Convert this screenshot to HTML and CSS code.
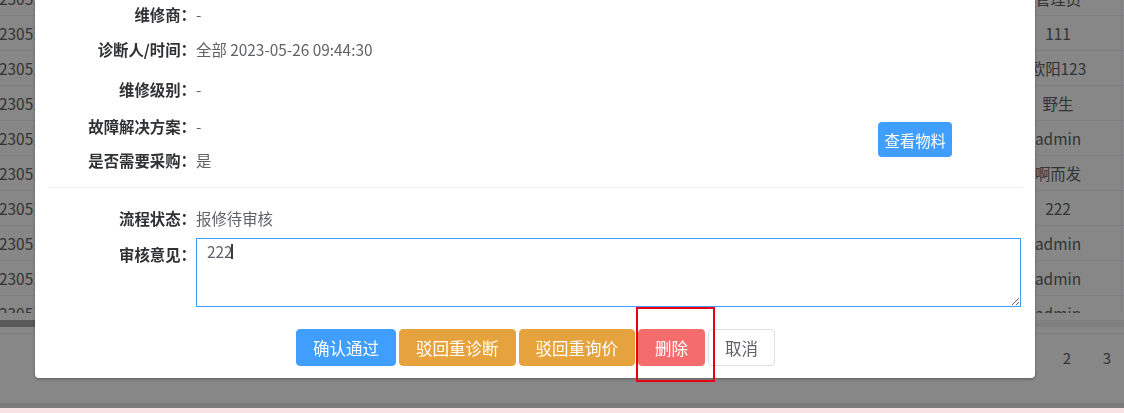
FILE: index.html
```html
<!DOCTYPE html>
<html lang="zh-CN">
<head>
<meta charset="utf-8">
<title>审核</title>
<link rel="stylesheet" href="styles.css">
</head>
<body>
<div class="page">
  <div class="table">
    <div class="tbody">
      <div class="rows">
        <div class="tr"><div class="td td-id">2305120001</div><div class="td td-fill"></div><div class="td td-name">管理员</div><div class="td td-end"></div></div>
        <div class="tr"><div class="td td-id">2305120002</div><div class="td td-fill"></div><div class="td td-name">111</div><div class="td td-end"></div></div>
        <div class="tr"><div class="td td-id">2305120003</div><div class="td td-fill"></div><div class="td td-name">欧阳123</div><div class="td td-end"></div></div>
        <div class="tr"><div class="td td-id">2305120004</div><div class="td td-fill"></div><div class="td td-name">野生</div><div class="td td-end"></div></div>
        <div class="tr"><div class="td td-id">2305120005</div><div class="td td-fill"></div><div class="td td-name">admin</div><div class="td td-end"></div></div>
        <div class="tr"><div class="td td-id">2305120006</div><div class="td td-fill"></div><div class="td td-name">啊而发</div><div class="td td-end"></div></div>
        <div class="tr"><div class="td td-id">2305120007</div><div class="td td-fill"></div><div class="td td-name">222</div><div class="td td-end"></div></div>
        <div class="tr"><div class="td td-id">2305120008</div><div class="td td-fill"></div><div class="td td-name">admin</div><div class="td td-end"></div></div>
        <div class="tr"><div class="td td-id">2305120009</div><div class="td td-fill"></div><div class="td td-name">admin</div><div class="td td-end"></div></div>
        <div class="tr"><div class="td td-id">2305120010</div><div class="td td-fill"></div><div class="td td-name">admin</div><div class="td td-end"></div></div>
      </div>
    </div>
    <div class="hscroll"><div class="hscroll-track"><div class="hscroll-thumb"></div></div></div>
  </div>
  <div class="pager"><span class="pager-item">2</span><span class="pager-item">3</span></div>
  <div class="page-bottom"></div>
</div>

<div class="overlay"></div>

<div class="dialog">
  <div class="info">
    <div class="info-list">
      <div class="field row-a"><span class="label">维修商：</span><span class="value">-</span></div>
      <div class="field row-b"><span class="label">诊断人/时间：</span><span class="value">全部 2023-05-26 09:44:30</span></div>
      <div class="field row-c"><span class="label">维修级别：</span><span class="value">-</span></div>
      <div class="field row-d"><span class="label">故障解决方案：</span><span class="value">-</span></div>
      <div class="field row-e"><span class="label">是否需要采购：</span><span class="value">是</span></div>
    </div>
    <div class="info-side">
      <button class="btn-view" type="button">查看物料</button>
    </div>
  </div>
  <div class="divider"></div>
  <div class="review">
    <div class="field row-status"><span class="label">流程状态：</span><span class="value">报修待审核</span></div>
    <div class="field row-opinion">
      <span class="label label-top">审核意见：</span>
      <div class="textarea-wrap">
        <textarea class="textarea">222</textarea>
        <span class="caret"></span>
      </div>
    </div>
  </div>
  <div class="actions">
    <button class="btn btn-primary" type="button">确认通过</button>
    <button class="btn btn-warning" type="button">驳回重诊断</button>
    <button class="btn btn-warning" type="button">驳回重询价</button>
    <button class="btn btn-danger" type="button">删除</button>
    <button class="btn btn-default" type="button">取消</button>
  </div>
</div>

<div class="annot"></div>
<div class="pink"></div>
</body>
</html>
```

FILE: styles.css
```css
* { box-sizing: border-box; }

html, body {
  margin: 0;
  padding: 0;
}

body {
  width: 1124px;
  height: 413px;
  overflow: hidden;
  position: relative;
  background: #ffffff;
  font-family: "Noto Sans CJK SC", "Microsoft YaHei", sans-serif;
  font-size: 15.4px;
  color: #606266;
}

/* ---------- background page ---------- */
.page {
  height: 413px;
  display: flex;
  flex-direction: column;
}

.tbody {
  height: 313px;
  overflow: hidden;
}

.rows {
  margin-top: -19px;
}

.tr {
  height: 35px;
  display: flex;
  align-items: center;
  border-bottom: 1px solid #ebeef5;
}

.td {
  height: 100%;
  display: flex;
  align-items: center;
  white-space: nowrap;
}

.td-id {
  width: 150px;
  margin-left: -1px;
}

.td-fill { flex: 1; }

.td-name {
  width: 127px;
  justify-content: center;
  border-right: 1px solid #ebeef5;
}

.td-end { width: 2px; }

.hscroll {
  padding-top: 7px;
  padding-bottom: 6px;
  border-bottom: 1px solid #ebeef5;
}

.hscroll-track {
  height: 7px;
  background: #f1f1f1;
}

.hscroll-thumb {
  width: 900px;
  height: 7px;
  background: #a8a8a8;
}

.pager {
  margin-top: 10px;
  height: 28px;
  display: flex;
  justify-content: flex-end;
  gap: 10px;
  padding-right: 2px;
}

.pager-item {
  width: 30px;
  text-align: center;
  line-height: 28px;
  font-size: 15px;
}

.page-bottom {
  margin-top: auto;
  height: 10px;
  border-top: 5px solid #e8e8e8;
}

/* ---------- overlay ---------- */
.overlay {
  position: fixed;
  inset: 0;
  background: rgba(0, 0, 0, 0.47);
}

.pink {
  position: fixed;
  left: 0;
  right: 0;
  bottom: 0;
  height: 5px;
  background: #f7e3e3;
}

/* ---------- dialog ---------- */
.dialog {
  position: absolute;
  left: 35px;
  top: -10px;
  width: 1000px;
  padding: 10px 12px 12px 13px;
  background: #ffffff;
  border-radius: 4px;
  box-shadow: 0 1px 3px rgba(0, 0, 0, 0.3);
}

.info {
  display: flex;
}

.info-list {
  flex: 1;
  display: flex;
  flex-direction: column;
}

.info-side {
  padding-top: 122px;
  padding-right: 71px;
}

.field {
  display: flex;
  align-items: center;
}

.row-a { height: 27px; }
.row-b { height: 44px; }
.row-c { height: 35px; }
.row-d { height: 39px; }
.row-e { height: 30px; }

.label {
  width: 148px;
  flex: none;
  text-align: right;
  font-weight: bold;
  color: #303133;
  white-space: nowrap;
}

.value {
  color: #606266;
  white-space: nowrap;
}

.btn-view {
  height: 35px;
  padding: 0 6px;
  border: none;
  border-radius: 4px;
  background: #409eff;
  color: #ffffff;
  font-family: inherit;
  font-size: 15.4px;
}

.divider {
  margin-top: 12px;
  height: 1px;
  background: #ebeef5;
}

.review {
  padding-top: 14px;
}

.row-status { height: 32px; }

.row-opinion {
  margin-top: 4px;
  align-items: flex-start;
}

.label-top { line-height: 32px; }

.textarea-wrap {
  flex: 1;
  margin-right: 2px;
  position: relative;
}

.textarea {
  display: block;
  width: 100%;
  height: 69px;
  margin: 0;
  padding: 2px 10px;
  border: 1px solid #409eff;
  border-radius: 0;
  outline: none;
  font-family: inherit;
  font-size: 15.4px;
  line-height: 20px;
  color: #606266;
  background: #ffffff;
}

.caret {
  position: absolute;
  left: 35px;
  top: 6px;
  width: 2px;
  height: 15px;
  background: #3a3a3a;
}

.actions {
  margin-top: 22px;
  display: flex;
  justify-content: center;
  gap: 3px;
}

.btn {
  height: 37px;
  padding: 0 16px;
  border: 1px solid transparent;
  border-radius: 4px;
  font-family: inherit;
  font-size: 16.5px;
  color: #ffffff;
  white-space: nowrap;
}

.btn-primary { background: #409eff; border-color: #409eff; }
.btn-warning { background: #e6a23c; border-color: #e6a23c; }
.btn-danger  { background: #f56c6c; border-color: #f56c6c; }
.btn-default { background: #ffffff; border-color: #dcdfe6; color: #606266; }

/* annotation rectangle drawn over the screenshot */
.annot {
  position: absolute;
  left: 636px;
  top: 307px;
  width: 79px;
  height: 75px;
  border: 2px solid #e60012;
}
```
